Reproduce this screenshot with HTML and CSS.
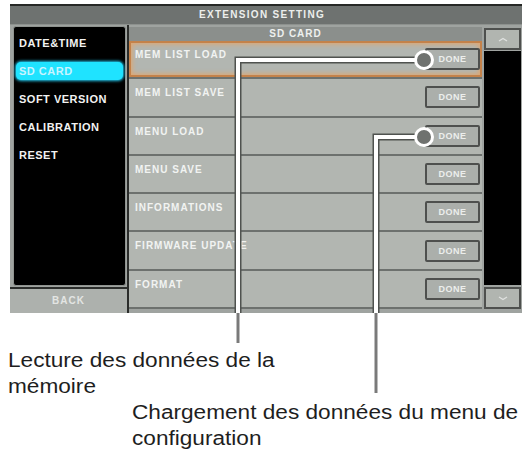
FILE: index.html
```html
<!DOCTYPE html>
<html lang="fr">
<head>
<meta charset="utf-8">
<title>Extension setting</title>
<link rel="stylesheet" href="styles.css">
</head>
<body>
<div class="screen">
  <div class="titlebar">EXTENSION SETTING</div>
  <div class="body">
    <div class="side">
      <div class="menu">
        <div class="item">DATE&amp;TIME</div>
        <div class="item active">SD CARD</div>
        <div class="item">SOFT VERSION</div>
        <div class="item">CALIBRATION</div>
        <div class="item">RESET</div>
      </div>
      <div class="back">BACK</div>
    </div>
    <div class="main">
      <div class="header">SD CARD</div>
      <div class="row selected"><span class="label">MEM LIST LOAD</span><span class="done">DONE</span></div>
      <div class="row"><span class="label">MEM LIST SAVE</span><span class="done">DONE</span></div>
      <div class="row"><span class="label">MENU LOAD</span><span class="done">DONE</span></div>
      <div class="row"><span class="label">MENU SAVE</span><span class="done">DONE</span></div>
      <div class="row"><span class="label">INFORMATIONS</span><span class="done">DONE</span></div>
      <div class="row"><span class="label">FIRMWARE UPDATE</span><span class="done">DONE</span></div>
      <div class="row"><span class="label">FORMAT</span><span class="done">DONE</span></div>
    </div>
    <div class="scroll">
      <div class="sbtn"><svg width="10" height="5" viewBox="0 0 10 5"><path d="M1 4 L5 1.5 L9 4" fill="none" stroke="#dfe1df" stroke-width="1.4"/></svg></div>
      <div class="track"></div>
      <div class="sbtn down"><svg width="10" height="5" viewBox="0 0 10 5"><path d="M1 1 L5 3.5 L9 1" fill="none" stroke="#dfe1df" stroke-width="1.4"/></svg></div>
    </div>
  </div>
</div>
<div class="notes">
  <p class="note1">Lecture des données de la<br>mémoire</p>
  <p class="note2">Chargement des données du menu de<br>configuration</p>
</div>
<svg class="callouts" width="524" height="450" viewBox="0 0 524 450">
  <path d="M424 60 H238 V313" fill="none" stroke="#4f524f" stroke-width="7"/>
  <path d="M424 60 H238 V313" fill="none" stroke="#ffffff" stroke-width="4"/>
  <path d="M238 313 V343" fill="none" stroke="#7a7a7a" stroke-width="3"/>
  <path d="M424 137 H376 V313" fill="none" stroke="#4f524f" stroke-width="7"/>
  <path d="M424 137 H376 V313" fill="none" stroke="#ffffff" stroke-width="4"/>
  <path d="M376 313 V393" fill="none" stroke="#7a7a7a" stroke-width="3"/>
  <circle cx="424" cy="60" r="8.5" fill="#6f726f" stroke="#ffffff" stroke-width="3"/>
  <circle cx="424" cy="137" r="8.5" fill="#6f726f" stroke="#ffffff" stroke-width="3"/>
</svg>
</body>
</html>
```
FILE: styles.css
```css
body {
  margin: 0;
  width: 524px;
  height: 450px;
  overflow: hidden;
  position: relative;
  background: #ffffff;
  font-family: "Liberation Sans", Arial, sans-serif;
}

.screen {
  margin: 4px 0 0 10px;
  width: 512px;
  background: #9fa3a0;
  border-top: 2px solid #262826;
}

.titlebar {
  height: 18px;
  line-height: 18px;
  background: #6e7270;
  border-bottom: 1px solid #8d918e;
  color: #eceeec;
  font-size: 10px;
  font-weight: bold;
  letter-spacing: 1.3px;
  text-align: center;
  padding-right: 8px;
}

.body {
  display: flex;
  height: 288px;
}

.side {
  width: 117px;
  border-right: 2px solid #2b2d2b;
  display: flex;
  flex-direction: column;
}

.menu {
  flex: 1;
  margin: 1px 1px 1px 3px;
  background: #000000;
  border: 1px solid #8f938f;
  border-radius: 3px;
  padding-top: 7px;
}

.item {
  height: 18px;
  line-height: 18px;
  margin: 0 2px 10px;
  padding-left: 3px;
  color: #f2f2f2;
  font-size: 11px;
  font-weight: bold;
  letter-spacing: 0.5px;
  border-radius: 5px;
}

.item.active {
  background: #1fe3ff;
  box-shadow: 0 0 3px 1px #22c8ee;
  color: #c9f4ff;
}

.back {
  height: 24px;
  line-height: 24px;
  border-top: 2px solid #2b2d2b;
  background: #adb1ad;
  color: #e3e5e3;
  font-size: 10px;
  font-weight: bold;
  letter-spacing: 1px;
  text-align: center;
}

.main {
  width: 353px;
  padding-top: 2px;
}

.header {
  height: 14px;
  line-height: 14px;
  background: #8b8f8c;
  color: #eef0ee;
  font-size: 10px;
  font-weight: bold;
  letter-spacing: 1px;
  text-align: center;
  padding-right: 20px;
}

.row {
  height: 36.3px;
  border-bottom: 2px solid #6d716e;
  background: #b2b6b1;
  display: flex;
  justify-content: space-between;
  align-items: center;
  padding: 0 2px 0 6px;
}

.row.selected {
  box-shadow: inset 0 0 0 2px #c4824a, inset 0 0 5px 3px #e3a56c;
}

.label {
  align-self: flex-start;
  margin-top: 8px;
  line-height: 12px;
  color: #f1f3f1;
  font-size: 10px;
  font-weight: bold;
  letter-spacing: 1px;
}

.done {
  box-sizing: border-box;
  width: 55px;
  height: 22px;
  line-height: 18px;
  border: 2px solid #4e504e;
  border-radius: 2px;
  background: #abafab;
  color: #eceeec;
  font-size: 9px;
  font-weight: bold;
  letter-spacing: 0.5px;
  text-align: center;
}

.scroll {
  width: 37px;
  margin-left: 2px;
  padding-top: 3px;
  display: flex;
  flex-direction: column;
}

.sbtn {
  box-sizing: border-box;
  height: 22px;
  border: 2px solid #4e504e;
  background: #b1b5b0;
  display: flex;
  align-items: center;
  justify-content: center;
}

.sbtn.down {
  margin-top: 2px;
}

.track {
  height: 234px;
  margin-top: 1px;
  background: #000000;
}

.notes {
  margin-top: 34px;
  font-size: 19.5px;
  line-height: 26px;
  color: #1e1e1e;
}

.notes p {
  margin: 0;
  width: max-content;
  transform: scaleX(1.16);
  transform-origin: 0 0;
}

.notes p.note1 {
  margin-left: 8px;
}

.notes p.note2 {
  margin-left: 132px;
}

.callouts {
  position: absolute;
  top: 0;
  left: 0;
  pointer-events: none;
}
```
